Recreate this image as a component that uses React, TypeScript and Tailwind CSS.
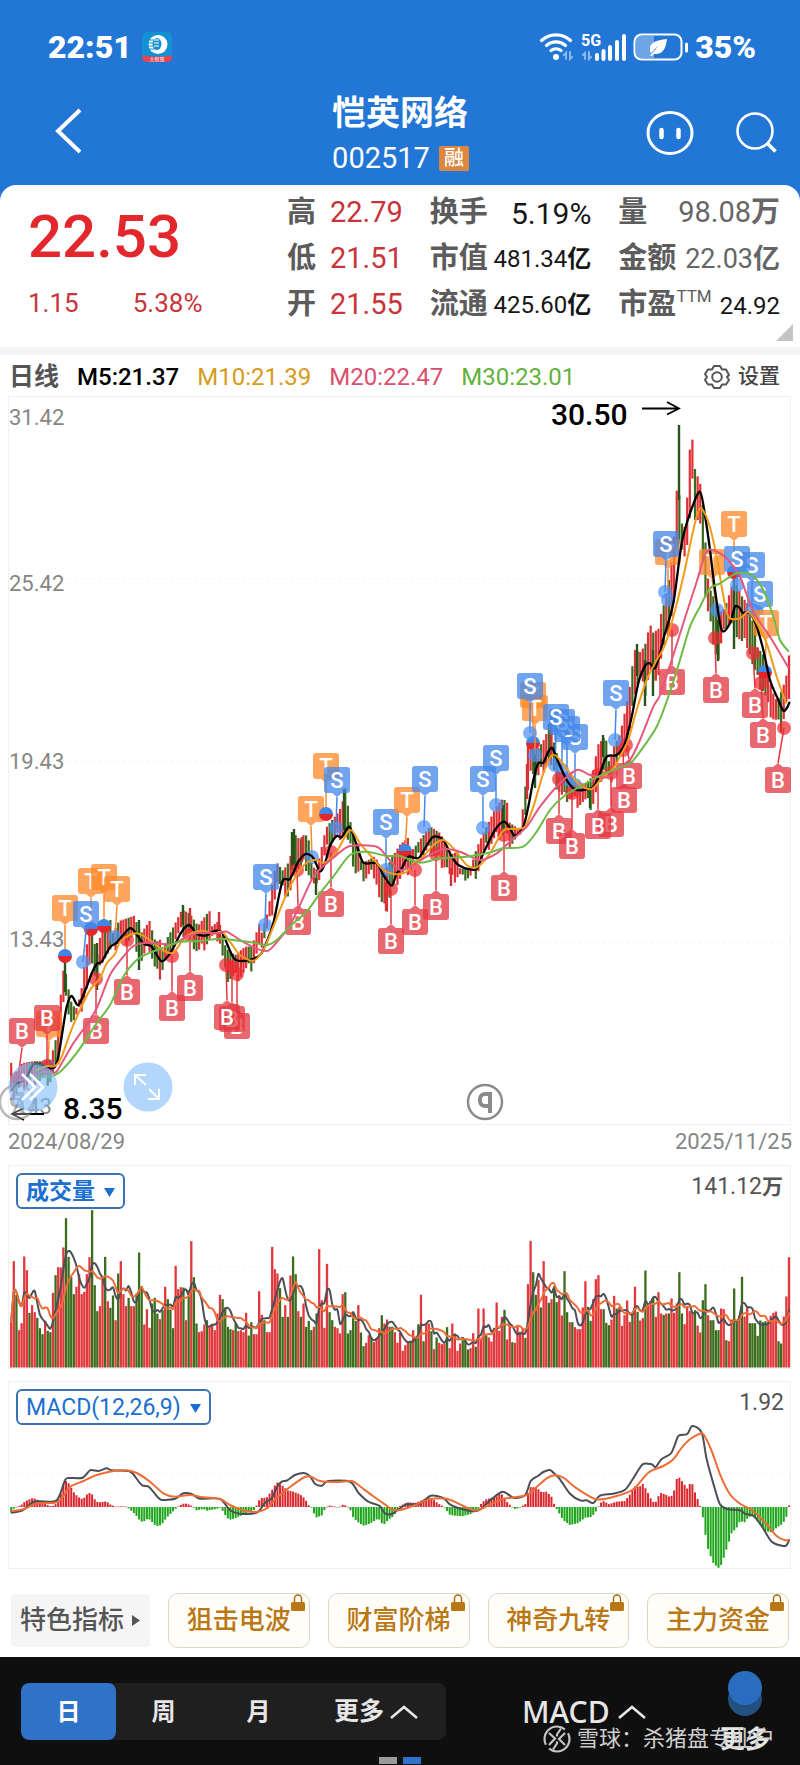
import type { ReactNode } from 'react';

type Kind = 'B' | 'S' | 'T';

const VOLUME =
    '517r 333r 434g 540r 519r 319r 360r 488g 465r 486r 503g 534g 552g 512r 542g 546g 428r 375g 351r 352r 292r 204g 320g 380g 432g 410r 372r 432r 425r 372r 321r 180g 405g 483g 468r 385r 320g 453r 473g 436g 510r 370g 333r 432r 468r 443g 468r 468r 430g 307g 408g 523r 477r 533r 460g 443g 490g 507r 480g 410r 447g 478g 534g 347r 417r 411r 412g 510r 420g 273r 381g 520g 546r 543r 523r 510g 528r 522r 540r 490r 434r 447g 472g 530g 537g 540r 520g 543r 540r 546r 488r 556g 516g 552r 552r 423r 494r 510g 546r 546r 290r 357r 370r 414g 500g 465r 500g 376r 319g 372g 483r 500g 460r 530g 512g 540g 530r 490g 297r 450r 533r 341r 486g 510g 530r 534r 550r 432r 426g 550g 540g 488g 512g 465r 547g 588g 578r 555r 562g 576r 564r 534r 495g 520r 508r 530g 530g 546r 578r 548r ' +
    '602r 585r 575r 572g 540r 562g 522g 434r 573g 520r 520r 543g 597r 562g 578r 582r 580r 531g 594r 520r 550r 602r 580r 570g 570g 598g 594r 549r 590g 475r 565r 475r 555g 562r 574r 533r 457r 542r 500r 479g 568r 520r 576g 578r 530r 545r 534r 563g 402r 272r 366g 434g 390r 472g 333r 437r 458g 447r 408g 456g 435r 496r 363g 486g 516r 516g 531r 537r 537r 472r 393r 470g 512g 447r 387r 375r 477r 477g 518g 525g 508r 437r 475g 470r 527r 495r 451r 515r 490g 410r 485g 511r 504r 361g 460r 453r 440g 500r 426r 490r 494g 490r 490g 445r 488r 460r 366g 490g 522r 468r 483r 490r 480g 526r 547r 450g 402g 495r 510g 510g 540g 540g 475r 477r 570g 573r 508r 415g 517g 495r 380g 499r 470r 519g 519g 519g 557g 511g 516g 513g 516r 497r 488r 484r 573g 580g 499r 439r 321r';

const bars = VOLUME.split(' ').map((item, i) => ({
    x: 11.2 + i * 2.61,
    height: (652 - parseInt(item, 10)) / 3,
    up: item.endsWith('r'),
}));

// Points are kept as x,y in thirds of a chart unit, shifted by the origin of their part.
const pts = (data: string, ox = 0, oy = 0) =>
    data.split(' ').map((pair) => {
        const [x, y] = pair.split(',').map(Number);
        return [x / 3 + ox, y / 3 + oy];
    });

const smooth = (p: number[][]) => {
    let d = `M${p[0][0].toFixed(1)} ${p[0][1].toFixed(1)}`;
    for (let i = 0; i < p.length - 1; i++) {
        const a = p[i - 1] || p[i];
        const b = p[i];
        const c = p[i + 1];
        const e = p[i + 2] || c;
        const values = [b[0] + (c[0] - a[0]) / 7, b[1] + (c[1] - a[1]) / 7, c[0] - (e[0] - b[0]) / 7, c[1] - (e[1] - b[1]) / 7, c[0], c[1]];
        d += 'C' + values.map((v) => v.toFixed(1)).join(' ');
    }
    return d;
};

const valueAt = (p: number[][], x: number, column = 1) => {
    let i = p.findIndex((q) => q[0] >= x);
    if (i < 0) return p[p.length - 1][column];
    if (i === 0) i = 1;
    const [a, b] = [p[i - 1], p[i]];
    return a[column] + ((b[column] - a[column]) * (x - a[0])) / (b[0] - a[0]);
};

const movingAverage = (size: number) =>
    bars.map((bar, i) => {
        const part = bars.slice(Math.max(0, i - size + 1), i + 1);
        return [bar.x, 1367 - part.reduce((sum, b) => sum + b.height, 0) / part.length];
    });

const ma5 = [
    ...pts('36,990 50,972 80,950 100,913 120,914 150,925 165,920 175,890 185,830 200,740 215,708 235,735 260,680 275,640 290,612 305,605 330,562 350,548 385,508 400,510 430,550 455,560 485,604 515,572 545,515 568,495 590,522 620,526 640,514 665,516 685,560 705,598 740,602 780,585 800,545 820,490 847,365 870,357 895,305 917,282 940,294 960,334 975,310 990,258 1010,228 1025,232 1048,200 1070,255 1090,308 1130,310 1150,345 1175,377 1190,340', 0, 760),
    ...pts('5,685 25,650 55,655 75,625 100,590 130,600 155,650 175,675 210,688 232,685 250,640 285,570 312,545 330,565 345,588 370,560 385,500 400,420 415,370 430,368 445,335 457,324 470,355 500,420 525,448 550,450 580,440 600,400 620,350 650,345 675,310 695,230 715,130 735,78 750,70 765,85 780,40', 400, 640),
    ...pts('372,740 400,640 425,460 450,370 480,305 497,390 510,480 525,600 545,720 570,700 585,650 600,655 608,668 630,670 650,710 670,780 690,870 715,930 730,962 740,955 748,938', 540, 390),
];
const ma10 = [
    ...pts('110,930 140,918 165,918 185,890 210,820 240,750 270,690 300,655 320,610 345,582 360,545 385,527 410,520 450,540 490,572 520,578 545,545 570,522 610,512 640,522 665,515 690,545 720,585 760,602 790,570 820,500 860,400 890,345 920,308 945,300 975,308 1010,275 1050,210 1080,250 1110,285 1150,330 1180,342', 0, 760),
    ...pts('0,702 20,695 40,670 70,650 100,615 130,600 160,625 200,675 230,682 270,640 310,572 345,567 375,560 400,500 430,400 457,345 480,360 510,400 540,435 575,447 610,410 640,385 665,340 685,300 710,210 740,120 770,60', 400, 640),
    ...pts('375,765 400,680 430,560 460,420 480,355 505,395 530,500 545,590 565,680 600,685 625,665 650,700 680,760 710,860 738,938', 540, 390),
];
const ma20 = [
    ...pts('60,962 100,950 130,935 165,938 185,910 220,850 255,800 290,745 330,645 370,590 400,558 440,548 490,552 520,553 560,530 600,518 650,520 680,515 720,540 770,566 805,572 840,535 870,495 900,435 940,350 980,310 1010,285 1050,258 1130,260 1160,290', 0, 760),
    ...pts('0,690 40,675 80,650 130,628 180,635 240,660 290,640 330,605 380,560 420,500 470,440 530,390 570,405 620,412 660,385 690,360', 400, 640),
    ...pts('300,1050 340,950 360,915 395,810 430,700 470,575 500,485 530,485 565,510 600,560 640,665 690,740 745,832', 540, 390),
];
const ma30 = [
    ...pts('90,955 165,945 200,915 240,865 290,790 330,735 370,650 410,600 450,578 500,560 540,545 600,543 660,536 700,540 750,546 800,555 830,540 880,490 920,455 960,400 1000,350 1050,285 1100,275 1160,288', 0, 760),
    ...pts('0,648 60,668 120,655 200,650 260,640 310,625 370,620 410,575 450,510 490,470 540,440 590,412 640,390 690,370 720,335', 400, 640),
    ...pts('350,1010 385,920 420,810 450,710 480,650 510,595 540,580 590,550 635,555 670,600 700,680 720,750 745,783', 540, 390),
];

// x, high, low
const RANGE =
    '12,1070,1095 22,1058,1085 34,1060,1078 50,1066,1080 56,1045,1066 60,1010,1050 62,992,1020 64,950,993 67,975,1000 72,1000,1020 77,1005,1015 82,985,1005 88,935,985 91,925,950 97,960,985 102,930,955 111,928,950 119,915,940 127,915,938 134,915,935 141,935,960 150,925,945 154,945,965 159,950,975 167,932,955 175,920,938 182,908,930 190,915,935 198,930,950 208,920,938 219,915,935 226,945,975 235,955,975 245,950,970 252,952,965 260,930,945 268,905,925 274,870,900 277,860,880 283,870,890 290,862,895 293,835,865 300,845,865 305,840,860 316,865,890 320,850,870 326,825,850 331,820,838 337,815,835 342,808,830 345,790,835 350,825,845 355,850,870 365,855,875 375,853,870 380,865,900 386,870,910 392,860,885 400,850,875 410,845,865 420,835,855 430,825,848 440,835,858 447,850,865 451,860,880 460,860,872 470,865,875 477,845,870 485,830,848 497,810,835 503,805,830 510,815,840 520,825,835 525,790,815 528,740,790 532,735,765 538,750,775 543,745,765 548,735,760 551,715,755 555,760,780 562,765,795 570,770,795 578,780,800 585,785,800 592,780,805 598,750,785 604,745,765 610,755,780 614,740,765 620,730,755 626,705,740 631,680,725 634,650,690 640,655,675 645,650,690 650,630,665 655,645,690 660,610,660 665,595,640 670,570,620 674,540,600 676,491,546 679,490,543 681,519,545 684,533,559 687,502,546 689,455,535 692,435,472 695,469,520 700,483,520 702,490,550 706,560,600 711,585,625 718,600,660 722,610,640 727,600,620 734,580,625 742,600,640 748,610,640 753,630,665 758,640,680 764,650,690 768,670,705 773,690,715 777,700,720 782,690,725 786,680,700 789,658,700';
const range = RANGE.split(' ').map((item) => item.split(',').map(Number));

const candles = bars.map((bar, i) => {
    const wobble = ((i * 37) % 19) - 9;
    const calm = bar.x > 674 && bar.x < 705 ? 0 : 1;
    return {
        x: bar.x,
        high: valueAt(range, bar.x, 1) + wobble * 0.9 * calm,
        low: valueAt(range, bar.x, 2) + (((i * 23) % 13) - 4) * calm,
        up: bar.up,
    };
});

const spikes: [number, number, number, boolean][] = [
    [65, 952, 992, false], [97, 943, 990, false], [139, 920, 970, false], [183, 905, 925, false], [190, 908, 930, true],
    [219, 912, 940, true], [292, 832, 870, false], [294, 829, 866, false], [302, 837, 862, true], [316, 878, 895, false],
    [344, 789, 830, false], [386, 882, 911, true], [451, 868, 886, true], [503, 805, 835, false], [527, 764, 799, true],
    [535, 750, 788, false], [551, 711, 765, true], [590, 788, 808, false], [603, 735, 757, false],
    [637, 644, 676, false], [645, 660, 706, false], [653, 650, 696, false], [679, 425, 500, false], [718, 620, 661, false],
    [734, 575, 649, false],
];

// kind, badge centre, then the traded point the badge hangs from; "split" days hold both trades
const MARKERS: [Kind, number, number, number, number, string?][] = [
    ['T', 49, 1024, 48, 1066], ['B', 22, 1031, 18, 1078], ['B', 47, 1018, 47, 1066],
    ['T', 65, 908, 65, 956, 'split'], ['T', 91, 881, 91, 929, 'split'], ['T', 104, 877, 104, 926, 'split'],
    ['T', 117, 889, 115, 937], ['S', 86, 914, 83, 962], ['B', 96, 1031, 96, 979], ['B', 127, 992, 127, 940],
    ['B', 172, 1008, 172, 956], ['B', 190, 988, 190, 935], ['B', 237, 1026, 237, 974], ['B', 232, 1019, 232, 967],
    ['B', 227, 1017, 226, 965], ['S', 266, 877, 265, 925], ['B', 298, 922, 297, 870], ['B', 331, 904, 331, 852],
    ['T', 311, 809, 312, 857], ['T', 326, 766, 326, 814, 'split'], ['S', 337, 780, 336, 828], ['S', 386, 822, 386, 870],
    ['B', 391, 941, 391, 889], ['T', 407, 800, 405, 851, 'split'], ['S', 425, 779, 424, 827], ['B', 415, 922, 415, 870],
    ['B', 436, 907, 436, 854], ['S', 483, 779, 483, 828], ['S', 496, 758, 496, 805], ['B', 504, 888, 504, 835],
    ['T', 533, 695, 533, 743, 'split'], ['T', 535, 708, 535, 755], ['S', 530, 686, 530, 733], ['S', 575, 737, 575, 785],
    ['S', 567, 729, 567, 779], ['S', 562, 722, 562, 770], ['S', 556, 717, 555, 765], ['B', 559, 831, 559, 779],
    ['B', 572, 846, 572, 793], ['B', 611, 824, 611, 773], ['B', 598, 826, 598, 775], ['B', 624, 800, 623, 750],
    ['B', 629, 776, 626, 745], ['S', 616, 693, 615, 740], ['B', 672, 682, 672, 630], ['B', 716, 690, 715, 638],
    ['B', 755, 705, 753, 653], ['B', 763, 735, 761, 683], ['B', 778, 780, 784, 728], ['T', 668, 552, 668, 600],
    ['S', 666, 544, 665, 592], ['T', 734, 524, 734, 572, 'split'], ['T', 712, 562, 717, 610], ['S', 752, 565, 752, 610],
    ['S', 737, 559, 737, 585], ['S', 760, 594, 757, 612], ['T', 766, 623, 765, 672, 'split'],
];

const MARKER_COLORS: Record<Kind, string> = { B: '#e33842', S: '#4488ea', T: '#ff8a2b' };

const Marker = ({ marker }: { marker: (typeof MARKERS)[number] }) => {
    const [kind, x, y, dotX, dotY, mode] = marker;
    const color = MARKER_COLORS[kind];
    const above = dotY > y;
    const edge = above ? y + 13 : y - 13;
    const tip = above ? edge + 4 : edge - 4;
    return (
        <g>
            <line x1={x} y1={tip} x2={dotX} y2={dotY} stroke={color} strokeWidth="1.5" />
            {mode === 'split' ? (
                <>
                    <path d={`M${dotX - 7} ${dotY}a7 7 0 0 1 14 0z`} fill="#3f86e8" />
                    <path d={`M${dotX - 7} ${dotY}a7 7 0 0 0 14 0z`} fill="#e5242c" />
                </>
            ) : (
                <circle cx={dotX} cy={dotY} r="7" fill={kind === 'B' ? '#f02b33' : '#4f92f2'} opacity=".72" />
            )}
            <g fill={color} opacity=".76">
                <rect x={x - 13} y={y - 13} width="26" height="26" rx="3" />
                <path d={`M${x - 5} ${edge}L${x} ${tip}L${x + 5} ${edge}z`} />
            </g>
            <text x={x} y={y + 8} textAnchor="middle" fontSize="22" fontWeight="500" fill="#fff">
                {kind}
            </text>
        </g>
    );
};

const Line = ({ points, color, width = 1.8 }: { points: number[][]; color: string; width?: number }) => (
    <path d={smooth(points)} fill="none" stroke={color} strokeWidth={width} strokeLinejoin="round" strokeLinecap="round" />
);

const Frame = ({ y, height, grid }: { y: number; height: number; grid: number[] }) => (
    <g fill="none" stroke="#f0f0f0">
        <rect x="8.5" y={y + 0.5} width="782" height={height - 1} />
        {grid.map((g) => (
            <line key={g} x1="9" x2="790" y1={g} y2={g} strokeDasharray="2 4" />
        ))}
    </g>
);

const CircleQ = ({ x, y, opacity }: { x: number; y: number; opacity: number }) => (
    <g opacity={opacity} fill="none" stroke="#8b8b8b">
        <circle cx={x} cy={y} r="17" strokeWidth="2.5" fill="#fff" fillOpacity=".5" />
        <path d={`M${x + 5} ${y + 11}V${y - 8}h-5a5 5 0 0 0-5 5v2a5 5 0 0 0 5 5h5`} strokeWidth="4" />
    </g>
);

const PriceChart = () => (
    <svg viewBox="8 396 784 730" className="block w-full overflow-visible font-['Roboto',sans-serif]">
        <Frame y={396} height={729} grid={[579, 761, 943]} />
        <g fill="#868686" fontSize="22">
            <text x="9" y="425">31.42</text>
            <text x="9" y="591">25.42</text>
            <text x="9" y="769">19.43</text>
            <text x="9" y="947">13.43</text>
            <text x="9" y="1114">7.43</text>
        </g>
        {candles.map((c) => (
            <rect key={c.x} x={c.x - 1.1} y={c.high} width="2.2" height={Math.max(6, c.low - c.high)} fill={c.up ? '#df3035' : '#3a6a1e'} />
        ))}
        {spikes.map(([x, high, low, up]) => (
            <rect key={`${x}-${high}`} x={x - 1.2} y={high} width="2.4" height={low - high} fill={up ? '#cf3338' : '#27541a'} />
        ))}
        {MARKERS.map((m, i) => (
            <Marker key={i} marker={m} />
        ))}
        <Line points={ma5} color="#000" width={2.3} />
        <Line points={ma10} color="#f09b1a" width={2} />
        <Line points={ma20} color="#e4587c" width={2} />
        <Line points={ma30} color="#6dba45" width={2} />
        <g fontSize="30" fontWeight="500" fill="#000">
            <text x="551" y="425">30.50</text>
            <text x="63" y="1119">8.35</text>
        </g>
        <g fill="none" stroke="#000" strokeWidth="1.8">
            <path d="M642 408.500h37M667 402l12 6.500-12 6" />
            <path d="M44 1114H12M24 1108l-12 6 12 6" />
        </g>
        <CircleQ x={485} y={1102} opacity={1} />
        <CircleQ x={17} y={1102} opacity={0.6} />
        <g fill="#82bcfb" opacity=".6">
            <circle cx="33" cy="1087" r="24.500" />
            <circle cx="148" cy="1087" r="24.500" />
        </g>
        <g fill="none" stroke="#fff" strokeWidth="2.600">
            <path d="M22 1074l13 13-13 13M30 1074l13 13-13 13" />
            <path d="M146 1085l-11-10M135 1085v-10h11M149 1089l10 10M159 1089v10h-11" strokeWidth="2" />
        </g>
    </svg>
);

const VolumeChart = () => (
    <svg viewBox="8 1165 784 204" className="block w-full">
        <Frame y={1165} height={204} grid={[1267]} />
        {bars.map((b) => (
            <rect key={b.x} x={b.x - 1.15} y={1367.5 - b.height} width="2.3" height={b.height} fill={b.up ? '#e0383c' : '#3a6d1c'} />
        ))}
        <Line points={movingAverage(5)} color="#4b5056" width={2} />
        <Line points={movingAverage(10)} color="#ee6c35" width={2} />
    </svg>
);

const histogram = [
    ...pts('33,-18 45,0 61,3 69,12 84,22 100,27 116,20 132,14 147,3 163,4 171,14 179,30 187,55 194,80 202,76 210,66 218,48 234,30 249,23 265,43 275,40 288,16 300,14 320,17 330,8 345,1 375,2 382,0 390,-8 406,-22 422,-44 430,-44 445,-34 469,-58 484,-54 500,-32 524,-8 535,2 547,9 555,11 571,6 580,0 588,-10 610,-6 620,-11 650,-6 660,-2 670,-14 680,-32 690,-38 705,-34 740,-18 765,-8 775,18 785,27 800,28 810,42 822,60 830,75 838,70 850,62 862,50 880,46 900,38 915,25 925,6 935,-2 947,-32 965,-26 975,-6 985,5 1000,2 1018,-1 1026,7 1040,4 1050,-6 1060,-32 1075,-46 1090,-56 1110,-50 1135,-34 1150,-55 1165,-38 1180,-28 1195,-6'),
    ...pts('0,3 10,8 22,14 45,12 60,18 75,24 85,28 100,22 115,10 130,2 135,-4 150,-24 185,-28 210,-22 235,-6 240,6 255,22 290,32 302,42 312,30 320,16 332,4 345,-6 355,-4 365,2 378,10 385,48 392,60 410,58 425,44 440,46 455,30 462,10 470,-6 490,-40 510,-54 535,-48 555,-32 575,-30 590,-10 600,12 612,18 625,8 650,16 675,18 690,38 705,62 718,60 728,70 740,50 755,20 765,10 775,32 783,42 800,36 812,28 822,48 830,84 838,88 850,72 862,55 870,70 878,68 885,44 900,6 907,-20 915,-76 925,-130 940,-168 955,-183 965,-172 975,-140 985,-110 995,-78 1010,-62 1020,-42 1035,-46 1045,-30 1060,-28 1075,-45 1085,-60 1095,-72 1115,-76 1130,-62 1145,-52 1155,-40 1162,-22 1167,5', 400),
];
const dif = [
    ...pts('36,1085 68,1078 90,1060 110,1051 165,1051 180,1030 195,988 205,981 248,980 270,958 295,960 320,952 335,958 385,960 400,970 425,1002 447,1008 470,1035 485,1047 525,1043 550,1027 575,1029 600,1043 660,1044 690,1078 720,1088 770,1085 795,1055 815,1042 830,1010 845,992 862,988 885,972 912,966 930,976 945,998 965,1004 985,990 1050,992 1075,1025 1105,1052 1138,1064 1155,1087 1175,1089', 0, 1150),
    ...pts('0,1072 20,1060 60,1058 92,1034 130,1041 150,1060 185,1074 220,1081 240,1076 265,1053 307,1022 340,1040 375,1033 392,990 415,974 430,963 450,957 465,970 480,985 510,1028 540,1048 560,1048 580,1056 600,1034 640,1028 675,1016 700,982 728,940 755,940 767,948 785,924 812,908 825,880 836,854 862,849 877,825 905,845 920,925 945,1015 960,1060 980,1074 1020,1078 1035,1088 1060,1094 1085,1125 1115,1172 1150,1185 1160,1182 1167,1168', 400, 1150),
];
const dea = [
    ...pts('36,1080 70,1075 110,1057 165,1055 185,1042 210,1008 250,990 290,972 340,960 380,958 410,966 450,992 490,1027 525,1037 570,1032 610,1039 660,1044 690,1062 720,1075 760,1083 800,1072 830,1040 870,1008 915,978 935,978 960,990 1010,993 1055,990 1080,1006 1120,1036 1160,1064 1180,1077', 0, 1150),
    ...pts('0,1077 30,1068 90,1045 140,1043 180,1060 220,1078 245,1073 300,1046 350,1038 385,1030 410,1008 440,982 465,973 490,980 530,1012 590,1045 650,1035 700,1015 745,965 790,945 820,925 845,890 870,865 900,848 912,852 935,900 960,970 990,1030 1020,1058 1060,1080 1100,1120 1130,1155 1155,1168 1167,1166', 400, 1150),
];

const MacdChart = () => (
    <svg viewBox="8 1380 784 188" className="block w-full">
        <Frame y={1380} height={188} grid={[1473]} />
        {bars.map((b) => {
            const value = valueAt(histogram, b.x);
            return <rect key={b.x} x={b.x - 1} y={value > 0 ? 1506 - value : 1506} width="2" height={Math.max(0.6, Math.abs(value))} fill={value > 0 ? '#d9272e' : '#1fa51b'} />;
        })}
        <Line points={dif} color="#4b4f55" width={2} />
        <Line points={dea} color="#ee6c35" width={2} />
    </svg>
);

const StatusBar = () => (
    <div className="flex h-[60px] items-center justify-between pt-[34px] pr-[44px] pl-[48px]">
        <div className="flex items-center gap-[10px]">
            <span className="text-[32px] leading-none font-black">22:51</span>
            <svg viewBox="0 0 30 30" className="size-[30px]">
                <rect width="30" height="30" rx="5" fill="#1590d2" />
                <circle cx="16" cy="12.500" r="9.500" fill="#fff" />
                <ellipse cx="15" cy="12" rx="4.500" ry="6" fill="#1590d2" />
                <path d="M5 8h10M4 11h11M4 14h11M6 17h9" stroke="#1590d2" strokeWidth="1" />
                <path d="M12 8h5M12 11h5M12 14h5" stroke="#fff" strokeWidth="1" />
                <path d="M0 23.500q15 2.500 30 0V25a5 5 0 0 1-5 5H5a5 5 0 0 1-5-5z" fill="#e8434d" />
                <text x="15" y="29" textAnchor="middle" fontSize="5" fill="#fff">大智慧</text>
            </svg>
        </div>
        <div className="flex items-center gap-[6px]">
            <svg viewBox="0 0 88 28" className="h-[28px] w-[88px]" fill="none" stroke="#fff" strokeLinecap="round">
                <path d="M2.500 7.500a21.500 21.500 0 0 1 29 0M7.500 12.500a14.500 14.500 0 0 1 19 0M12 17.500a8 8 0 0 1 10 0" strokeWidth="3.200" />
                <circle cx="17" cy="24" r="3" fill="#fff" stroke="none" />
                <path d="M27 26v-6l-2 2M31 19v7l2-2M46 26v-6l-2 2M50 19v7l2-2" stroke="#8ab8ef" strokeWidth="2" />
                <path d="M58 26v-4M64.500 26v-8M71 26v-12M78 26v-17M85 26V3" strokeWidth="4" />
                <text x="42" y="13" fontSize="16" fontWeight="700" fill="#fff" stroke="none">5G</text>
            </svg>
            <svg viewBox="0 0 56 28" className="h-[28px] w-[56px]" fill="none">
                <path d="M3 3h18v22H3z" fill="#6ca4e6" />
                <rect x="1.500" y="1.500" width="47" height="25" rx="7" stroke="#fff" strokeWidth="2" />
                <path d="M53.500 11v7" stroke="#fff" strokeWidth="3" strokeLinecap="round" />
                <path d="M34 6c-11 1-18 4-17 11 0 1 0 2 1 3l8-8-9 11 2 0 2-2c9 1 12-6 13-15z" fill="#fff" />
            </svg>
            <span className="text-[32px] leading-none font-black">35%</span>
        </div>
    </div>
);

const Header = () => (
    <header className="grid grid-cols-[1fr_auto_1fr] items-center px-[22px] pt-[34px] pb-[8px]">
        <button aria-label="返回" className="w-fit pb-[10px] pl-[32px]">
            <svg viewBox="0 0 28 46" className="h-[46px] w-[28px]" fill="none" stroke="#fff" strokeWidth="4">
                <path d="M26 2L4 23l22 21" />
            </svg>
        </button>
        <div className="pl-[1px]">
            <h1 className="text-[34px] leading-[38px] font-bold">恺英网络</h1>
            <p className="flex items-center gap-[9px] pt-[7px] text-[29px] leading-[38px]">
                002517
                <span className="rounded-xs bg-[#dc8640] px-[5px] text-[20px] leading-[25px] font-medium">融</span>
            </p>
        </div>
        <div className="flex items-center justify-end gap-[42px] pb-[6px]">
            <button aria-label="助手">
                <svg viewBox="0 0 48 44" className="h-[44px] w-[48px]" fill="none" stroke="#fff">
                    <ellipse cx="24" cy="22" rx="22" ry="20.500" strokeWidth="3" />
                    <path d="M15.500 19v7M32.500 19v7" strokeWidth="4.500" strokeLinecap="round" />
                </svg>
            </button>
            <button aria-label="搜索">
                <svg viewBox="0 0 42 42" className="size-[42px]" fill="none" stroke="#fff" strokeWidth="2.600">
                    <circle cx="19" cy="19" r="17.500" />
                    <path d="M31.500 31.500l8 8" strokeWidth="3.500" />
                </svg>
            </button>
        </div>
    </header>
);

const Stat = ({ label, sup, children }: { label: string; sup?: string; children: ReactNode }) => (
    <div className="flex h-[46px] items-center justify-between whitespace-nowrap">
        <dt className="text-[29px] font-bold text-[#5c5c5c]">
            {label}
            {sup && <sup className="-top-[12px] text-[17px] leading-none font-normal">{sup}</sup>}
        </dt>
        <dd>{children}</dd>
    </div>
);

const Quote = () => (
    <section className="relative flex h-[162px] rounded-t-[16px] bg-white pt-[5px] pr-[20px] pl-[28px]">
        <div className="w-[259px] text-[#d92b30]">
            <p className="pt-[11px] text-[60px] leading-[72px] font-medium text-[#e2282d]">22.53</p>
            <p className="flex gap-[54px] pt-[14px] text-[26px] leading-[32px] text-[#c7353a]">
                <span>1.15</span>
                <span>5.38%</span>
            </p>
        </div>
        <dl className="grid flex-1 grid-cols-[116fr_162fr_162fr] content-start gap-x-[27px]">
            <div className="text-[29px] text-[#c9343a]">
                <Stat label="高">22.79</Stat>
                <Stat label="低">21.51</Stat>
                <Stat label="开">21.55</Stat>
            </div>
            <div className="text-[24px] text-[#161616]">
                <Stat label="换手"><span className="text-[30px]">5.19%</span></Stat>
                <Stat label="市值">481.34<b>亿</b></Stat>
                <Stat label="流通">425.60<b>亿</b></Stat>
            </div>
            <div className="text-[27px] text-[#666]">
                <Stat label="量"><span className="text-[29px]">98.08<span className="font-bold">万</span></span></Stat>
                <Stat label="金额">22.03<span className="font-bold">亿</span></Stat>
                <Stat label="市盈" sup="TTM"><span className="text-[24px] text-[#161616]">24.92</span></Stat>
            </div>
        </dl>
        <svg viewBox="0 0 17 17" className="absolute right-[7px] bottom-[6px] size-[17px]">
            <path d="M17 0v17H0z" fill="#c4c4c4" />
        </svg>
    </section>
);

const Averages = () => (
    <div className="flex h-[41px] items-center gap-[18px] pt-[3px] pr-[20px] pl-[9px] text-[25px] whitespace-nowrap">
        <span className="font-bold text-[#555]">日线</span>
        <span className="text-[24px] font-medium text-black">M5:21.37</span>
        <span className="text-[24px] text-[#d79a1c]">M10:21.39</span>
        <span className="text-[24px] text-[#d9506f]">M20:22.47</span>
        <span className="text-[24px] text-[#62b13d]">M30:23.01</span>
        <button className="ml-auto flex items-center gap-[8px] text-[21px] font-medium text-[#444]">
            <svg viewBox="0 0 26 26" className="size-[26px]" fill="none" stroke="#555" strokeWidth="2" strokeLinejoin="round">
                <path d="M10 2h6l2 3.500 4 0L25 11l-2 2 2 3-3 4.500h-4L16 24h-6l-2-3.500H4L1 16l2-3-2-3 3-4.500h4z" />
                <circle cx="13" cy="13" r="4.800" />
            </svg>
            设置
        </button>
    </div>
);

const IndicatorSelect = ({ label, value, className }: { label: string; value: string; className: string }) => (
    <label className={`absolute top-[8px] left-[8px] flex h-[36px] items-center gap-[9px] rounded-[6px] border-2 border-[#3a73b4] bg-white px-[8px] pt-[2px] text-[#1a6fd0] ${className}`}>
        <select aria-label={label} className="appearance-none bg-transparent leading-[30px] outline-none">
            <option>{value}</option>
        </select>
        <svg viewBox="0 0 11 9" className="h-[9px] w-[11px]">
            <path d="M0 0h11L5.500 9z" fill="#1a6fd0" />
        </svg>
    </label>
);

const Lock = () => (
    <svg viewBox="0 0 14 17" className="absolute top-0 right-[4px] h-[17px] w-[14px]">
        <path d="M3.500 9V4.500a3.500 3.500 0 0 1 7 0V9" fill="none" stroke="#a56c14" strokeWidth="1.500" />
        <rect y="8" width="14" height="9" rx="1.500" fill="#b97715" />
    </svg>
);

const FEATURES = ['狙击电波', '财富阶梯', '神奇九转', '主力资金'];

const Features = () => (
    <div className="flex gap-[18px] px-[11px] pt-[24px] pb-[9px] text-[26px] font-medium whitespace-nowrap">
        <button className="my-px flex w-[139px] shrink-0 items-center gap-[8px] rounded-sm bg-[#f5f5f5] pl-[9px] text-[#555]">
            特色指标
            <svg viewBox="0 0 8 11" className="h-[11px] w-[8px]">
                <path d="M0 0v11l8-5.500z" fill="#555" />
            </svg>
        </button>
        {FEATURES.map((name) => (
            <button key={name} className="relative h-[55px] flex-1 rounded-[10px] border border-[#ddd8c4] bg-[#fffdf7] text-[#b97715]">
                {name}
                <Lock />
            </button>
        ))}
    </div>
);

const Caret = () => (
    <svg viewBox="0 0 28 14" className="h-[14px] w-[28px]" fill="none" stroke="currentColor" strokeWidth="2.600">
        <path d="M1 13L14 2l13 11" />
    </svg>
);

const BottomBar = () => (
    <nav className="relative h-[109px] overflow-hidden bg-[#0f0f0f] text-[24px] text-[#e6e6e6]">
        <div className="flex pt-[26px] pl-[21px]">
            <div className="flex h-[57px] w-[425px] overflow-hidden rounded-[8px] bg-[#1f1f1f] font-bold">
                <button className="w-[95px] rounded-[8px] bg-[#2f73c9] text-white">日</button>
                <button className="w-[95px]">周</button>
                <button className="w-[95px]">月</button>
                <button className="flex flex-1 items-center justify-center gap-[6px] text-[25px]">更多 <Caret /></button>
            </div>
            <button className="ml-[76px] flex items-center gap-[8px] font-['Noto_Sans','Noto_Sans_CJK_SC',sans-serif] text-[30px] font-medium">
                MACD <Caret />
            </button>
        </div>
        <button className="absolute top-[13px] right-[30px] flex flex-col items-center text-[25px] leading-[30px] font-bold">
            <svg viewBox="0 0 36 46" className="h-[46px] w-[36px]">
                <circle cx="18" cy="29" r="17" fill="#23517f" />
                <circle cx="18" cy="18" r="17" fill="#2a6dc0" />
            </svg>
            <span className="pt-[9px]">更多</span>
        </button>
        <div className="absolute right-[25px] bottom-[11px] flex items-center gap-[6px] text-[22px] leading-[32px] whitespace-nowrap text-[#cfcfcf]">
            <svg viewBox="0 0 28 28" className="size-[28px]" fill="none" stroke="#c4c4c4" strokeWidth="2.200">
                <circle cx="14" cy="14" r="12.500" strokeDasharray="34 5" strokeDashoffset="6" />
                <path d="M6 8l6 5.500L6 20M22 8l-6 6 6 6M18 3.500l-4 6v2M10 24.500l4-6v-2" />
            </svg>
            <span>雪球：杀猪盘专业户</span>
        </div>
        <div className="absolute bottom-[2px] left-[379px] flex gap-[6px]">
            <i className="h-[7px] w-[18px] bg-[#9a9a9a]" />
            <i className="h-[7px] w-[18px] bg-[#2f73c9]" />
        </div>
    </nav>
);

export default function App() {
    return (
        <main className="min-h-screen overflow-x-hidden bg-[#2176d6] font-['Roboto','Noto_Sans_CJK_SC',sans-serif] text-white">
            <StatusBar />
            <Header />
            <Quote />
            <div className="bg-white">
                <div className="h-[8px] bg-[#f4f4f4]" />
                <Averages />
                <div className="px-[8px] text-[#868686]">
                    <PriceChart />
                    <div className="flex h-[39px] items-center justify-between pb-[8px] text-[22px]">
                        <time>2024/08/29</time>
                        <time>2025/11/25</time>
                    </div>
                    <section className="relative">
                        <VolumeChart />
                        <IndicatorSelect label="成交量指标" value="成交量" className="text-[23px] font-bold" />
                        <p className="absolute top-[6px] right-[9px] text-[23px] leading-[32px] text-[#555]">141.12<span className="text-[21px] font-bold">万</span></p>
                    </section>
                    <section className="relative mt-[12px]">
                        <MacdChart />
                        <IndicatorSelect label="副图指标" value="MACD(12,26,9)" className="text-[23px]" />
                        <p className="absolute top-[6px] right-[8px] text-[23px] leading-[32px] text-[#555]">1.92</p>
                    </section>
                </div>
                <Features />
            </div>
            <BottomBar />
        </main>
    );
}
